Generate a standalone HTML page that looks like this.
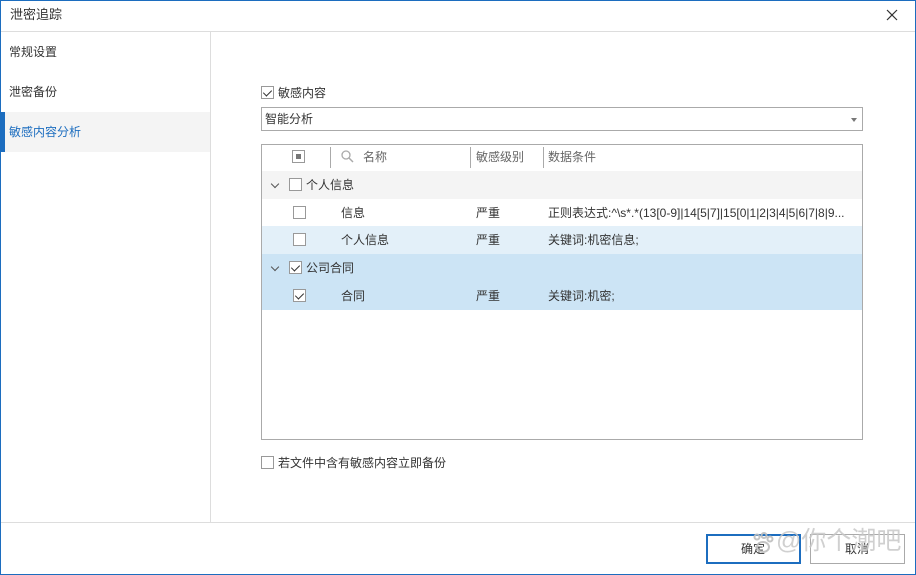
<!DOCTYPE html>
<html><head><meta charset="utf-8"><style>
*{margin:0;padding:0;box-sizing:border-box}
body{width:916px;height:575px;overflow:hidden;background:#fff;font-family:"Liberation Sans","Noto Sans CJK SC",sans-serif;font-size:12px;color:#333;position:relative}
.a{position:absolute}
.win{left:0;top:0;width:916px;height:575px;border:1px solid #1c6dbf}
.cb{position:absolute;width:13px;height:13px;border:1px solid #999;background:#fff}
.cb.k::after{content:"";position:absolute;left:3px;top:1px;width:4px;height:7px;border:solid #333;border-width:0 1.5px 1.5px 0;transform:rotate(45deg)}
.t{position:absolute;white-space:nowrap;line-height:14px}
.chev{position:absolute;width:6px;height:6px;border:solid #555;border-width:0 1.3px 1.3px 0;transform:rotate(45deg)}
</style></head><body>
<div class="a win"></div>
<div class="t" style="left:10px;top:8px;font-size:13px">泄密追踪</div>
<svg class="a" style="left:886px;top:9px" width="12" height="12"><path d="M1 1L11 11M11 1L1 11" stroke="#333" stroke-width="1.2"/></svg>
<div class="a" style="left:1px;top:31px;width:914px;height:1px;background:#ddd"></div>
<div class="a" style="left:210px;top:32px;width:1px;height:490px;background:#ddd"></div>
<div class="t" style="left:9px;top:45px">常规设置</div>
<div class="t" style="left:9px;top:85px">泄密备份</div>
<div class="a" style="left:1px;top:112px;width:209px;height:40px;background:#f4f4f4"></div>
<div class="a" style="left:1px;top:112px;width:4px;height:40px;background:#1c6dbf"></div>
<div class="t" style="left:9px;top:125px;color:#1c6dbf">敏感内容分析</div>

<div class="cb k" style="left:261px;top:86px"></div>
<div class="t" style="left:278px;top:86px">敏感内容</div>
<div class="a" style="left:261px;top:107px;width:602px;height:24px;border:1px solid #aaa"></div>
<div class="t" style="left:265px;top:112px">智能分析</div>
<div class="a" style="left:851px;top:118px;border:3px solid transparent;border-top:4px solid #777"></div>

<div class="a" style="left:261px;top:144px;width:602px;height:296px;border:1px solid #aaa"></div>
<div class="a" style="left:262px;top:171px;width:600px;height:28px;background:#f4f4f4"></div>
<div class="a" style="left:262px;top:226px;width:600px;height:28px;background:#e3f0f9"></div>
<div class="a" style="left:262px;top:254px;width:600px;height:56px;background:#cce4f5"></div>
<div class="cb" style="left:292px;top:150px"></div>
<div class="a" style="left:296px;top:154px;width:5px;height:5px;background:#777"></div>
<div class="a" style="left:330px;top:147px;width:1px;height:21px;background:#aaa"></div>
<div class="a" style="left:470px;top:147px;width:1px;height:21px;background:#aaa"></div>
<div class="a" style="left:543px;top:147px;width:1px;height:21px;background:#aaa"></div>
<svg class="a" style="left:341px;top:150px" width="13" height="13"><circle cx="5" cy="5" r="4" fill="none" stroke="#aaa" stroke-width="1.3"/><line x1="8" y1="8" x2="12" y2="12" stroke="#aaa" stroke-width="1.5"/></svg>
<div class="t" style="left:363px;top:150px;color:#666">名称</div>
<div class="t" style="left:476px;top:150px;color:#666">敏感级别</div>
<div class="t" style="left:548px;top:150px;color:#666">数据条件</div>

<div class="chev" style="left:272px;top:181px"></div>
<div class="cb" style="left:289px;top:178px"></div>
<div class="t" style="left:306px;top:178px">个人信息</div>

<div class="cb" style="left:293px;top:206px"></div>
<div class="t" style="left:341px;top:206px">信息</div>
<div class="t" style="left:476px;top:206px">严重</div>
<div class="t" style="left:548px;top:206px">正则表达式:^\s*.*(13[0-9]|14[5|7]|15[0|1|2|3|4|5|6|7|8|9...</div>

<div class="cb" style="left:293px;top:233px"></div>
<div class="t" style="left:341px;top:233px">个人信息</div>
<div class="t" style="left:476px;top:233px">严重</div>
<div class="t" style="left:548px;top:233px">关键词:机密信息;</div>

<div class="chev" style="left:272px;top:264px"></div>
<div class="cb k" style="left:289px;top:261px"></div>
<div class="t" style="left:306px;top:261px">公司合同</div>

<div class="cb k" style="left:293px;top:289px"></div>
<div class="t" style="left:341px;top:289px">合同</div>
<div class="t" style="left:476px;top:289px">严重</div>
<div class="t" style="left:548px;top:289px">关键词:机密;</div>

<div class="cb" style="left:261px;top:456px"></div>
<div class="t" style="left:278px;top:456px">若文件中含有敏感内容立即备份</div>

<div class="a" style="left:1px;top:522px;width:914px;height:1px;background:#ddd"></div>
<div class="a" style="left:706px;top:534px;width:95px;height:30px;border:2px solid #1c6dbf"></div>
<div class="t" style="left:741px;top:542px">确定</div>
<div class="a" style="left:810px;top:534px;width:95px;height:30px;border:1px solid #aaa"></div>
<div class="t" style="left:845px;top:542px">取消</div>
<svg class="a" style="left:752px;top:532px" width="22" height="22"><g fill="none" stroke="rgba(190,190,190,0.9)" stroke-width="2"><circle cx="5" cy="5" r="2.5"/><circle cx="12" cy="3.5" r="2.5"/><circle cx="18" cy="7" r="2.5"/><ellipse cx="11" cy="15" rx="6" ry="5"/></g></svg>
<div class="t" style="left:776px;top:527px;font-size:25px;line-height:28px;color:rgba(200,200,200,0.85)">@你个潮吧</div>
</body></html>
